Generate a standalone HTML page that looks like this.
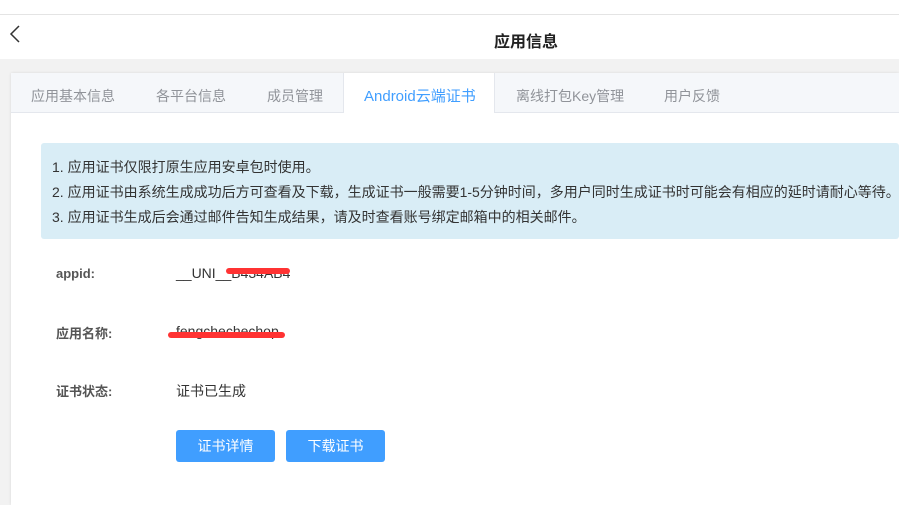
<!DOCTYPE html><html><head><style>
body{margin:0;width:899px;height:505px;overflow:hidden;background:#f2f2f2;font-family:"Liberation Sans","Noto Sans CJK SC",sans-serif;position:relative}
.a{position:absolute}
.tab{position:absolute;top:86px;font-size:14px;color:#909399}
.lbl{position:absolute;left:56px;font-size:13px;font-weight:bold;color:#555}
.val{position:absolute;left:176px;font-size:14px;color:#333}
.btn{position:absolute;top:430px;width:99px;height:32px;background:#409eff;border-radius:3px;color:#fff;font-size:14px;text-align:center;line-height:32px}
.red{position:absolute;height:6px;background:#f33;border-radius:3px}
</style></head><body>
<div class="a" style="left:0;top:0;width:899px;height:14px;background:#fff;border-bottom:1px solid #e4e4e4"></div>
<div class="a" style="left:0;top:15px;width:899px;height:44px;background:#fff"></div>
<svg class="a" style="left:8px;top:24px" width="14" height="20"><path d="M11 2 L3 10 L11 18" stroke="#333" stroke-width="1.5" fill="none"/></svg>
<div class="a" style="left:494px;top:28px;font-size:16px;font-weight:bold;color:#222">应用信息</div>
<div class="a" style="left:11px;top:73px;width:888px;height:432px;background:#fff;box-shadow:0 0 3px rgba(0,0,0,.1)"></div>
<div class="a" style="left:11px;top:73px;width:888px;height:39px;background:#f5f7fa;border-bottom:1px solid #e4e7ed"></div>
<div class="a" style="left:343px;top:73px;width:150px;height:40px;background:#fff;border-left:1px solid #e4e7ed;border-right:1px solid #e4e7ed"></div>
<div class="tab" style="left:31px">应用基本信息</div>
<div class="tab" style="left:156px">各平台信息</div>
<div class="tab" style="left:267px">成员管理</div>
<div class="tab" style="left:364px;color:#409eff;font-size:15px;top:85px">Android云端证书</div>
<div class="tab" style="left:516px">离线打包Key管理</div>
<div class="tab" style="left:664px">用户反馈</div>
<div class="a" style="left:41px;top:143px;width:858px;height:96px;background:#d9edf6;border-radius:3px;font-size:14px;color:#333;line-height:25px;padding-top:12px;box-sizing:border-box;padding-left:11px;white-space:nowrap">1. 应用证书仅限打原生应用安卓包时使用。<br>2. 应用证书由系统生成成功后方可查看及下载，生成证书一般需要1-5分钟时间，多用户同时生成证书时可能会有相应的延时请耐心等待。<br>3. 应用证书生成后会通过邮件告知生成结果，请及时查看账号绑定邮箱中的相关邮件。</div>
<div class="lbl" style="top:266px">appid:</div>
<div class="val" style="top:265px">__UNI__B434AB4</div>
<div class="red" style="left:226px;top:268px;width:64px"></div>
<div class="lbl" style="top:323px">应用名称:</div>
<div class="val" style="top:323px">fengchechechop</div>
<div class="red" style="left:168px;top:332px;width:117px"></div>
<div class="lbl" style="top:381px">证书状态:</div>
<div class="val" style="top:381px">证书已生成</div>
<div class="btn" style="left:176px">证书详情</div>
<div class="btn" style="left:286px">下载证书</div>
</body></html>
